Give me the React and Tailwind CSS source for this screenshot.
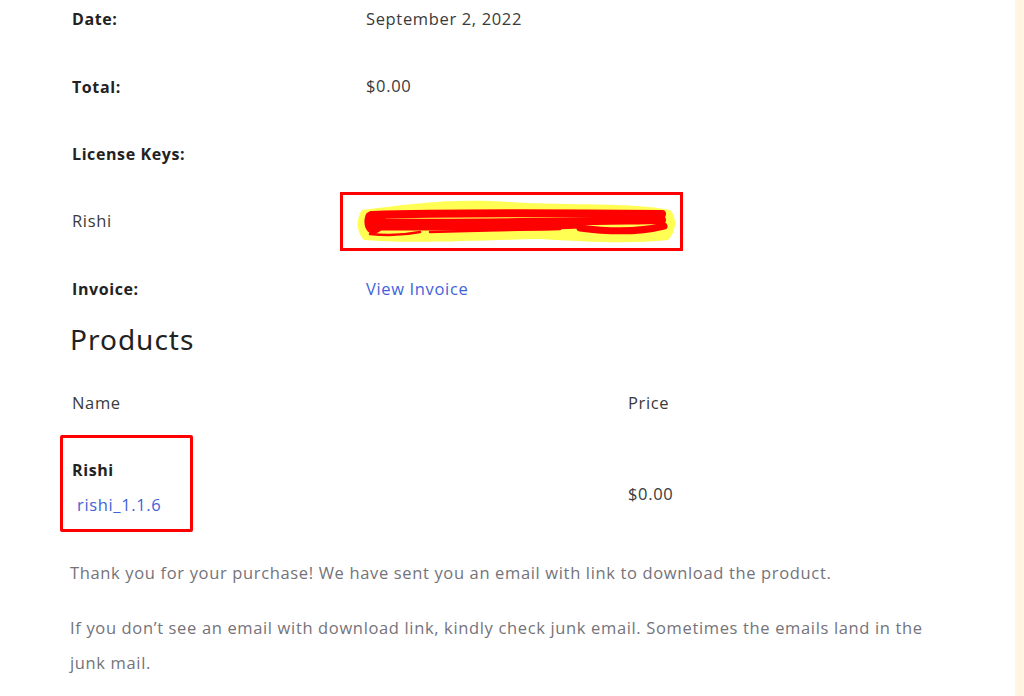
import React from 'react';

const font = { fontFamily: '"Open Sans", "Liberation Sans", sans-serif' };

const rows = [
    { label: 'Date:', value: 'September 2, 2022', bold: true },
    { label: 'Total:', value: '$0.00', bold: true },
    { label: 'License Keys:', value: '', bold: true },
    { label: 'Rishi', value: 'key', bold: false },
    { label: 'Invoice:', value: 'link', bold: true },
];

// hand-drawn redaction over the key
const Scribble = () => (
    <svg width="343" height="59" viewBox="0 0 343 59" className="absolute left-0 top-0">
        <rect x="1.5" y="1.5" width="340" height="56" fill="none" stroke="#ff0000" strokeWidth="3" />
        <path d="M22 18 C70 12 110 6 170 10 C230 14 290 10 330 18 C338 26 336 40 328 48 C290 52 250 50 200 47 C140 48 70 52 24 48 C16 40 16 26 22 18 Z" fill="#ffff40" opacity="0.9" />
        <path d="M26 22 C28 18 40 18 44 22 C48 28 44 40 34 42 C26 42 22 32 26 22 Z" fill="#ff0000" />
        <path d="M32 23 C90 21 200 21 322 22" stroke="#ff0000" strokeWidth="8" fill="none" strokeLinecap="round" />
        <path d="M32 30 C100 32 200 30 322 28" stroke="#ff0000" strokeWidth="8" fill="none" strokeLinecap="round" />
        <path d="M34 36 C80 36 200 36 240 34" stroke="#ff0000" strokeWidth="5" fill="none" strokeLinecap="round" />
        <path d="M240 36 C270 40 300 40 324 34" stroke="#ff0000" strokeWidth="7" fill="none" strokeLinecap="round" />
        <path d="M30 42 C50 44 70 42 80 40 M90 40 C150 38 180 38 220 37" stroke="#ff0000" strokeWidth="2.5" fill="none" strokeLinecap="round" />
    </svg>
);

const App = () => {
    return (
        <div className="min-h-screen bg-white flex overflow-hidden" style={font}>
            <div className="flex-1 pl-[70px] pr-[80px]">
                <div className="-mt-[14.75px]">
                    {rows.map((r, i) => (
                        <div key={i} className="h-[67.5px] flex items-center pl-[2px] text-[16.5px] tracking-[0.65px]">
                            <div className={`w-[294px] ${r.bold ? 'font-bold text-[16px] tracking-[0.6px] text-[#222222]' : 'text-[#3a3a3a]'}`}>{r.label}</div>
                            <div className="text-[#3a3a3a]">
                                {r.value === 'key' ? (
                                    <div className="relative w-[343px] h-[59px] -ml-[26px]">
                                        <Scribble />
                                    </div>
                                ) : r.value === 'link' ? (
                                    <span className="text-[#3f63d8]">View Invoice</span>
                                ) : r.value}
                            </div>
                        </div>
                    ))}
                </div>
                <h2 className="text-[28px] leading-[32px] tracking-[1px] text-[#222222]" style={{ fontFamily: '"Noto Sans", "Open Sans", sans-serif' }}>Products</h2>
                <div className="h-[80px] pt-[17px] flex items-center pl-[2px] text-[16.5px] tracking-[0.65px] text-[#3a3a3a]">
                    <div className="w-[556px]">Name</div>
                    <div>Price</div>
                </div>
                <div className="h-[120px] flex items-center pl-[2px] text-[16.5px] tracking-[0.65px]">
                    <div className="w-[556px] relative h-full">
                        <div className="absolute left-[-12px] top-0 w-[133px] h-[97px] border-[3px] border-[#ff0000] rounded-[2px]" />
                        <div className="pt-[23px] font-bold text-[16px] tracking-[0.6px] text-[#222222]">Rishi</div>
                        <div className="pt-[11px] pl-[5px] text-[#3f63d8]">rishi_1.1.6</div>
                    </div>
                    <div className="text-[#3a3a3a] -mt-[1px]">$0.00</div>
                </div>
                <div className="text-[16.5px] tracking-[0.65px] leading-[35px] text-[#74737a]">
                    <p>Thank you for your purchase! We have sent you an email with link to download the product.</p>
                    <p className="mt-[20px]">If you don’t see an email with download link, kindly check junk email. Sometimes the emails land in the junk mail.</p>
                </div>
            </div>
            <div className="w-[9px] bg-[#fff5e0] shrink-0" />
        </div>
    );
};

export default App;
